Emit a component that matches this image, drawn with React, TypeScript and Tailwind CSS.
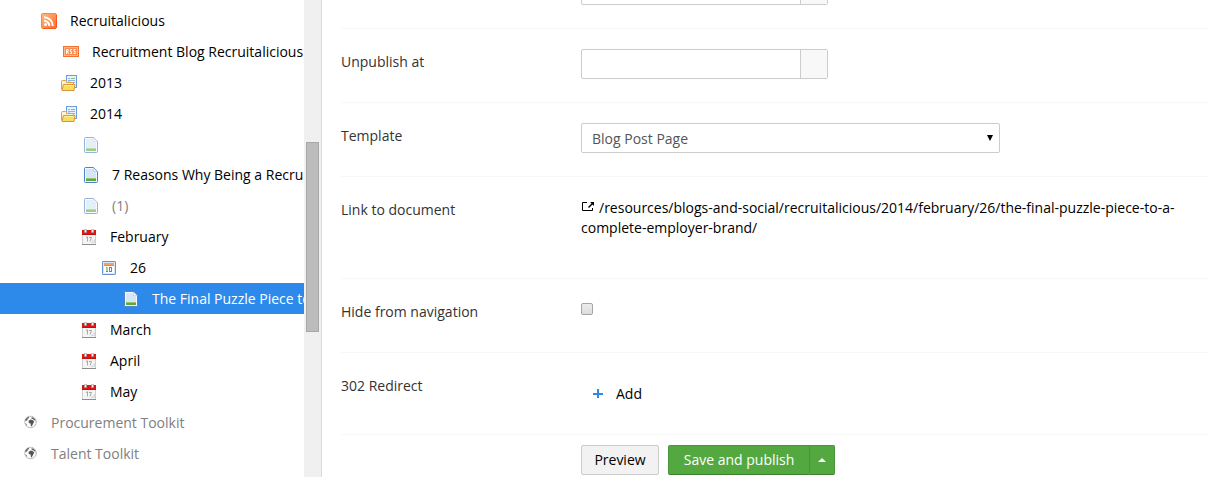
import { useState } from "react";

type IconName = "feed" | "rss" | "folder" | "doc" | "month" | "day" | "globe";

interface TreeNode {
  id: string;
  label: string;
  icon: IconName;
  indent: string;
  muted?: boolean;
  faded?: boolean;
}

const nodes: TreeNode[] = [
  { id: "blog", label: "Recruitalicious", icon: "feed", indent: "pl-[41px]" },
  { id: "rss", label: "Recruitment Blog Recruitalicious", icon: "rss", indent: "pl-[63px]" },
  { id: "2013", label: "2013", icon: "folder", indent: "pl-[61px]" },
  { id: "2014", label: "2014", icon: "folder", indent: "pl-[61px]" },
  { id: "untitled", label: "", icon: "doc", indent: "pl-[83px]", muted: true, faded: true },
  { id: "reasons", label: "7 Reasons Why Being a Recruiter Rocks", icon: "doc", indent: "pl-[83px]" },
  { id: "copy", label: "(1)", icon: "doc", indent: "pl-[83px]", muted: true, faded: true },
  { id: "feb", label: "February", icon: "month", indent: "pl-[81px]" },
  { id: "26", label: "26", icon: "day", indent: "pl-[101px]" },
  { id: "final", label: "The Final Puzzle Piece to a Complete Employer Brand", icon: "doc", indent: "pl-[123px]" },
  { id: "mar", label: "March", icon: "month", indent: "pl-[81px]" },
  { id: "apr", label: "April", icon: "month", indent: "pl-[81px]" },
  { id: "may", label: "May", icon: "month", indent: "pl-[81px]" },
  { id: "procurement", label: "Procurement Toolkit", icon: "globe", indent: "pl-[22px]", muted: true },
  { id: "talent", label: "Talent Toolkit", icon: "globe", indent: "pl-[22px]", muted: true },
];

function NodeIcon({ name }: { name: IconName }) {
  switch (name) {
    case "feed":
      return (
        <svg width="16" height="16" viewBox="0 0 16 16" fill="none">
          <defs>
            <linearGradient id="feedFill" x1="0" y1="0" x2="1" y2="1">
              <stop offset="0" stopColor="#ffbe7a" />
              <stop offset="1" stopColor="#fb6a2c" />
            </linearGradient>
          </defs>
          <rect x="0.5" y="0.5" width="15" height="15" rx="1.5" fill="url(#feedFill)" stroke="#f08a4b" />
          <path d="M15.5 2V14.5L14.5 15.5H2" stroke="#f9571c" />
          <circle cx="4.5" cy="11.5" r="1.5" fill="#fff" />
          <path d="M3 7.7A5.3 5.3 0 0 1 8.3 13M3 4.2A8.8 8.8 0 0 1 11.8 13" stroke="#fff" strokeWidth="1.9" />
        </svg>
      );
    case "rss":
      return (
        <svg width="16" height="16" viewBox="0 0 16 16" fill="none">
          <rect x="0.5" y="2.5" width="15" height="10" fill="#fc8a4c" stroke="#f2722f" />
          <rect x="1.5" y="3.5" width="13" height="8" stroke="#ffb98c" />
          <path d="M3.5 10V5.5H5.2V7.5H3.5M4.5 7.5L5.5 10" stroke="#fff" />
          <path d="M9 5.5H7.4V7.5H8.6V9.5H7M12.8 5.5H11V7.5H12.3V9.5H10.6" stroke="#fff" />
        </svg>
      );
    case "folder":
      return (
        <svg width="16" height="16" viewBox="0 0 16 16" fill="none">
          <rect x="5.5" y="0.5" width="10" height="12" fill="#e9f2fd" stroke="#6f9ddb" />
          <path d="M10 3.5H14" stroke="#7fbf78" />
          <path d="M7 3.5H9M7 5.5H14M10 7.5H14" stroke="#8fb2e0" />
          <path d="M7 7H9" stroke="#8fb2e0" />
          <path d="M0.5 14.5V6.5Q0.5 5.5 1.5 5.5H4.5Q5.5 5.5 5.5 6.5V7.5H12.5V10" fill="#fdf3d0" stroke="#dba348" />
          <path d="M1 15.5L2.4 9.5H14L13 15.5Z" fill="#f8dc5c" stroke="#d9963c" />
          <path d="M3.2 10.5H13" stroke="#fdf0ac" />
        </svg>
      );
    case "doc":
      return (
        <svg width="16" height="16" viewBox="0 0 16 16" fill="none">
          <path d="M1.5 1.5Q1.5 0.5 2.5 0.5H10.5L14.5 4.5V14.5Q14.5 15.5 13.5 15.5H2.5Q1.5 15.5 1.5 14.5Z" fill="#d5e6f8" stroke="#4a85c9" />
          <path d="M2.5 14.5V1.5H10.2L13.5 4.8V14.5Z" stroke="#f4f9ff" />
          <path d="M10.5 1V4.5H14Z" fill="#fff" stroke="#a9c8ea" strokeWidth="0.6" />
          <rect x="3" y="11" width="10" height="3" fill="#62a83e" />
          <path d="M3 11.5H13" stroke="#92c86e" />
        </svg>
      );
    case "month":
      return (
        <svg width="16" height="16" viewBox="0 0 16 16" fill="none">
          <rect x="1" y="5" width="14" height="11" fill="#f5f5f5" />
          <path d="M1.5 6V15M14.5 6V15" stroke="#d0d0d0" />
          <path d="M1 15.5H15" stroke="#8d8d8d" />
          <rect x="1" y="1" width="14" height="5" fill="#e01415" />
          <path d="M1 5.5H15" stroke="#c90c0c" />
          <rect x="3" y="0" width="3" height="4" rx="1.2" fill="#aaa29f" />
          <rect x="10" y="0" width="3" height="4" rx="1.2" fill="#aaa29f" />
          <path d="M4.5 0.5V3M11.5 0.5V3" stroke="#f1eeec" />
          <path d="M5 8.5L6.5 7.8V12.5M8 8.5H10.5L9 12.5" stroke="#a8a8a8" />
          <path d="M10.5 13.5L13.5 10.5V13.5Z" fill="#fff" stroke="#cfcfcf" strokeWidth="0.8" />
        </svg>
      );
    case "day":
      return (
        <svg width="16" height="16" viewBox="0 0 16 16" fill="none">
          <rect x="1.5" y="1.5" width="13" height="13" rx="0.5" fill="#dbe8f8" stroke="#6693d2" />
          <rect x="3" y="3" width="10" height="10" fill="#fff" />
          <rect x="3" y="3" width="10" height="3" fill="#fba05c" />
          <path d="M3 5.5H13" stroke="#f08741" />
          <path d="M5 8L6 7.5V11.5M5 11.5H7" stroke="#5f9a4e" />
          <rect x="8.5" y="7.5" width="2" height="4" stroke="#5f9a4e" />
        </svg>
      );
    case "globe":
      return (
        <svg width="16" height="16" viewBox="0 0 16 16" fill="none">
          <circle cx="8.5" cy="7" r="5.7" fill="#fff" stroke="#888" strokeWidth="0.8" strokeDasharray="1.6 0.5" />
          <path d="M3.2 4.8L5 2.6L7.2 1.8L7 3L5.6 4L5.4 5.2L3.6 6.2Z" fill="#666" />
          <path d="M6.6 5.8L8.8 4.6L11 5.2L12.2 6.8L11.2 8.6L10 11L8.9 11.4L8.6 8.6L6.8 8Z" fill="#555" />
          <path d="M9.4 2.2L11.8 2.8L13.4 4.8L13.2 6L11.4 4.4L9.6 3.8Z" fill="#666" />
          <path d="M3.4 8.2L4.8 9L5.2 11L3.8 10Z" fill="#999" />
        </svg>
      );
  }
}

function ContentTree() {
  const [selected, setSelected] = useState("final");

  return (
    <nav aria-label="Content" className="w-[304px] shrink-0 overflow-hidden pt-[5px]">
      <ul>
        {nodes.map((node) => {
          const active = node.id === selected;
          return (
            <li key={node.id} className={node.label ? "h-[31px]" : "h-[30px]"}>
              <a
                href={`#${node.id}`}
                aria-label={node.label || "Untitled"}
                onClick={() => setSelected(node.id)}
                className={`flex h-full items-start gap-[13px] whitespace-nowrap ${node.indent} ${
                  active ? "bg-[#2e8aea] text-white" : node.muted ? "text-[#808080]" : "text-black"
                }`}
              >
                <span className={`mt-2 h-4 w-4 shrink-0 ${node.faded ? "opacity-60" : ""}`}>
                  <NodeIcon name={node.icon} />
                </span>
                <span className="mt-[6px]">{node.label}</span>
              </a>
            </li>
          );
        })}
      </ul>
    </nav>
  );
}

function DateField({ id, label }: { id: string; label: string }) {
  return (
    <div className="flex h-[30px] w-[247px] overflow-hidden rounded-xs border border-[#ccc]">
      <input id={id} type="text" aria-label={label} className="min-w-0 flex-1 px-2 outline-none" />
      <button type="button" aria-label={`Pick a date, ${label}`} className="w-[27px] border-l border-[#ccc] bg-[#f8f8f8]" />
    </div>
  );
}

const rowClass = "flex border-b border-[#f8f8f8] pt-5";
const labelClass = "w-[240px] shrink-0 pt-[3px] text-[#333]";

export default function App() {
  const [hidden, setHidden] = useState(false);

  return (
    <div className="flex h-screen overflow-hidden bg-white font-['Open_Sans',sans-serif] text-[14px] leading-5 text-black">
      <ContentTree />

      <div className="w-[18px] shrink-0 border-r border-[#d9d9d9] bg-[#f0f0f0] px-[2px] pt-[142px]">
        <div className="h-[190px] border border-[#a8a8a8] bg-[#bcbcbc]" />
      </div>

      <main className="min-w-0 flex-1 overflow-hidden pr-1 pl-[19px]">
        {/* scrolled part way down the properties tab */}
        <form className="-mt-[45px]" onSubmit={(e) => e.preventDefault()}>
          <div className={`${rowClass} h-[74px] pl-[240px]`}>
            <DateField id="publish" label="Publish at" />
          </div>

          <div className={`${rowClass} h-[74px]`}>
            <label htmlFor="unpublish" className={labelClass}>Unpublish at</label>
            <DateField id="unpublish" label="Unpublish at" />
          </div>

          <div className={`${rowClass} h-[74px]`}>
            <label htmlFor="template" className={labelClass}>Template</label>
            <div className="relative h-[30px] w-[419px]">
              <select
                id="template"
                className="h-full w-full appearance-none rounded-xs border border-[#ccc] bg-white pt-px pl-[10px] text-[#555]"
              >
                <option>Blog Post Page</option>
              </select>
              <svg className="pointer-events-none absolute top-3 right-[7px]" width="6" height="6" viewBox="0 0 6 6">
                <path d="M0 0H6L3 6Z" fill="#000" />
              </svg>
            </div>
          </div>

          <div className={`${rowClass} pb-10`}>
            <div className={labelClass}>Link to document</div>
            <a href="#document" className="min-w-0 flex-1 pt-px pr-3">
              <svg className="mr-1 inline-block align-baseline" width="14" height="11" viewBox="0 0 14 11" fill="none">
                <path d="M6 0.5H1.5V8.5H11.5V6" stroke="#000" />
                <path d="M7.5 5.5L11.5 1.5" stroke="#000" strokeWidth="1.4" />
                <path d="M9 0H13V4Z" fill="#000" />
              </svg>
              /resources/blogs-and-social/recruitalicious/2014/february/26/the-final-puzzle-piece-to-a-complete-employer-brand/
            </a>
          </div>

          <div className={`${rowClass} h-[74px]`}>
            <label htmlFor="hide" className={labelClass}>Hide from navigation</label>
            <input
              id="hide"
              type="checkbox"
              checked={hidden}
              onChange={(e) => setHidden(e.target.checked)}
              className="mt-1 h-3 w-3 appearance-none rounded-xs border border-[#a5a5a5] bg-linear-to-b from-[#ededed] to-[#dcdcdc] checked:bg-[#2e8aea]"
            />
          </div>

          <div className={`${rowClass} h-[82px]`}>
            <div className={labelClass}>302 Redirect</div>
            <button type="button" className="mt-[11px] ml-3 flex h-5 items-center gap-[13px]">
              <svg width="10" height="12" viewBox="0 0 10 12">
                <path d="M4 1H6V5H10V7H6V10H4V7H0V5H4Z" fill="#2e8aea" />
              </svg>
              Add
            </button>
          </div>

          <div className="flex gap-[9px] pt-[10px] pl-[240px]">
            <button type="button" className="h-[30px] w-[78px] rounded-xs border border-[#ccc] bg-[#f2f2f2]">
              Preview
            </button>
            <div className="flex h-[30px] text-white">
              <button type="submit" className="w-[142px] rounded-l-xs border border-[#48963a] border-b-[#3c8030] bg-[#53a93f]">
                Save and publish
              </button>
              <button
                type="button"
                aria-label="More publish options"
                className="flex w-[25px] items-center justify-center rounded-r-xs border border-l-0 border-[#48963a] border-b-[#3c8030] bg-[#53a93f]"
              >
                <svg width="8" height="4" viewBox="0 0 8 4">
                  <path d="M0 4L4 0L8 4Z" fill="#fff" />
                </svg>
              </button>
            </div>
          </div>
        </form>
      </main>
    </div>
  );
}
